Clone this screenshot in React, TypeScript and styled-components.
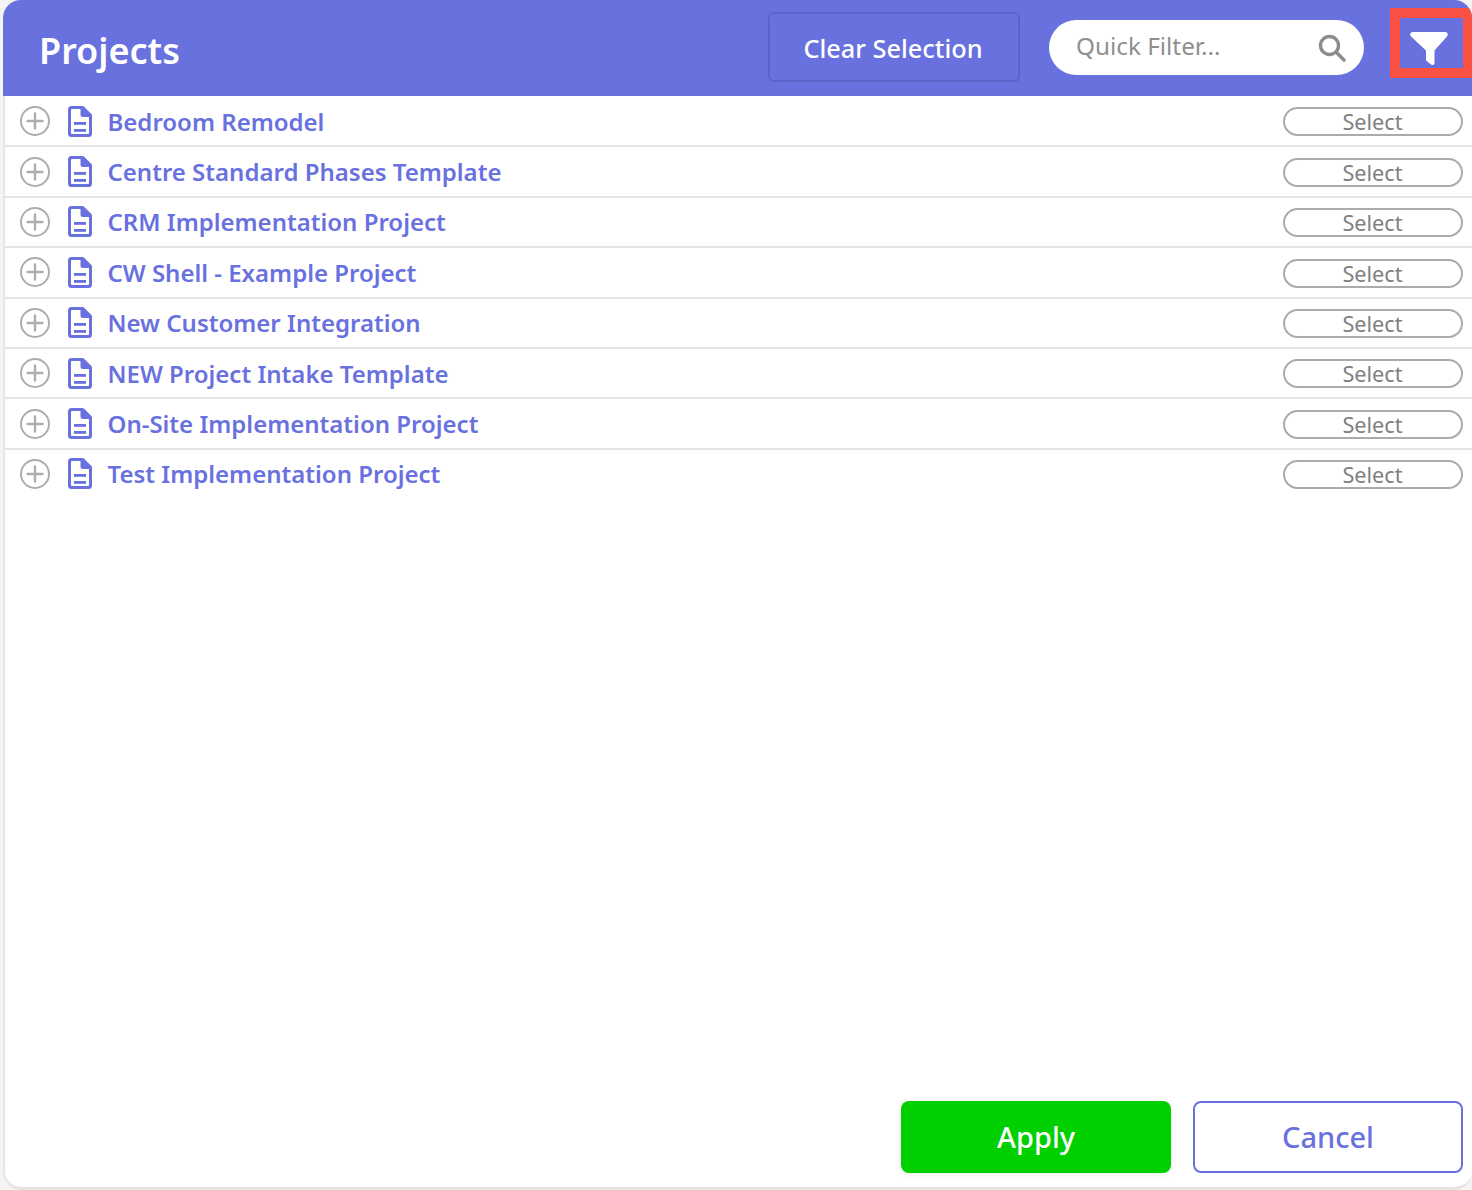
import React from "react";
import styled, { createGlobalStyle } from "styled-components";

const Global = createGlobalStyle`
  html, body { margin: 0; padding: 0; background: #f4f4f4; }
  body { font-family: "Noto Sans", "Open Sans", sans-serif; overflow: hidden; }
  * { box-sizing: border-box; }
`;

const Page = styled.div`
  width: 1472px;
  height: 1190px;
  padding-left: 3px;
  overflow: hidden;
`;

const Panel = styled.div`
  width: 1469px;
  height: 1190px;
  border-radius: 18px;
  display: flex;
  flex-direction: column;
  overflow: hidden;
`;

const Header = styled.header`
  height: 96px;
  flex: none;
  background: #6971df;
  display: flex;
  align-items: flex-start;
  padding-left: 36px;
`;

const Title = styled.h1`
  margin: 26px auto 0 0;
  font-size: 36px;
  line-height: 49px;
  font-weight: 600;
  color: #fff;
`;

const ClearButton = styled.button`
  width: 252px;
  height: 70px;
  margin-top: 12px;
  margin-right: 29px;
  padding: 2px 2px 0 0;
  background: transparent;
  border: 2px solid #5b63c9;
  border-radius: 6px;
  color: #fff;
  font: 500 25.3px/34px "Noto Sans", sans-serif;
`;

const SearchBox = styled.div`
  width: 315px;
  height: 55px;
  margin-top: 20px;
  margin-right: 26px;
  background: #fff;
  border-radius: 28px;
  display: flex;
  align-items: center;
  justify-content: space-between;
  padding: 0 18px 0 27px;
`;

const SearchText = styled.span`
  font-size: 24.3px;
  color: #8f8f8f;
  margin-top: -4px;
`;

const FilterFrame = styled.div`
  width: 82px;
  height: 70px;
  margin-top: 8px;
  border: 10px solid #fa5145;
  border-right-width: 9px;
  padding: 14px 16px 4px 10px;
`;

const Body = styled.div`
  flex: 1;
  min-height: 0;
  background: #fff;
  border-left: 2px solid #e6e6e6;
  border-bottom: 3px solid #e4e4e4;
  border-radius: 0 0 18px 18px;
  display: flex;
  flex-direction: column;
`;

const List = styled.div`
  flex: none;
  padding-top: 1px;
  display: flex;
  flex-direction: column;
`;

const Row = styled.div`
  height: 50.4px;
  display: flex;
  align-items: center;
  border-bottom: 2px solid #e5e5e5;
  padding: 0 9px 0 14.5px;
  &:last-child { border-bottom-color: transparent; }
`;

const RowIcons = styled.div`
  display: flex;
  align-items: center;
  gap: 18.5px;
  margin-right: 15.5px;
`;

const Name = styled.span`
  flex: 1;
  font-size: 24px;
  font-weight: 600;
  color: #6971df;
  white-space: nowrap;
`;

const SelectPill = styled.button`
  width: 180px;
  height: 29px;
  margin-top: 1.4px;
  padding: 0 1px 0 0;
  background: #fff;
  border: 2px solid #ababab;
  border-radius: 15px;
  color: #808080;
  font: 400 21.7px/25px "Noto Sans", sans-serif;
`;

const Footer = styled.footer`
  margin-top: auto;
  padding: 0 9px 14px 0;
  display: flex;
  justify-content: flex-end;
  gap: 22px;
`;

const FooterButton = styled.button<{ $primary?: boolean }>`
  width: 270px;
  height: 72px;
  padding: 0;
  border-radius: 8px;
  font: 500 29px/40px "Noto Sans", sans-serif;
  background: ${(p) => (p.$primary ? "#00cf00" : "#fff")};
  color: ${(p) => (p.$primary ? "#fff" : "#6971df")};
  border: ${(p) => (p.$primary ? "none" : "2px solid #6971df")};
  box-shadow: ${(p) => (p.$primary ? "0 1px 6px rgba(0,0,0,.08)" : "none")};
`;

const PlusIcon = () => (
  <svg width="30" height="30" viewBox="0 0 30 30" fill="none" stroke="#adadad">
    <circle cx="15" cy="15" r="14" strokeWidth="2" />
    <path d="M15 7.5v15M7.5 15h15" strokeWidth="2.400" strokeLinecap="round" />
  </svg>
);

const DocIcon = () => (
  <svg width="24" height="31" viewBox="0 0 24 31" fill="#6971df">
    <path
      fillRule="evenodd"
      d="M3.500 0H14.500a2 2 0 0 1 1.400.6l7.500 7.500a2 2 0 0 1 .6 1.400V27.500a3.500 3.500 0 0 1-3.500 3.500H3.500A3.500 3.500 0 0 1 0 27.500V3.500A3.500 3.500 0 0 1 3.500 0Zm.5 3a1 1 0 0 0-1 1V27a1 1 0 0 0 1 1h16a1 1 0 0 0 1-1V11h-6a2.500 2.500 0 0 1-2.500-2.500V3Z"
    />
    <rect x="6" y="16" width="12" height="2.800" />
    <rect x="6" y="23" width="12" height="2.800" />
  </svg>
);

const SearchIcon = () => (
  <svg width="28" height="28" viewBox="0 0 28 28" fill="none" stroke="#8c8c8c" strokeLinecap="round">
    <circle cx="11.500" cy="11.500" r="9" strokeWidth="3.400" />
    <path d="M18.500 18.500l7.500 7.500" strokeWidth="3.400" />
  </svg>
);

const FunnelIcon = () => (
  <svg width="38" height="33" viewBox="0 0 38 33" fill="#fff" display="block">
    <path d="M3 0h32c2.400 0 3.600 2.400 2.200 4.300L24.500 18.500V31c0 2-2.200 2.600-3.500 1.500l-4.300-3.600a2 2 0 0 1-.7-1.500V18.500L.8 4.300C-.6 2.400.6 0 3 0Z" />
  </svg>
);

const projects = [
  "Bedroom Remodel",
  "Centre Standard Phases Template",
  "CRM Implementation Project",
  "CW Shell - Example Project",
  "New Customer Integration",
  "NEW Project Intake Template",
  "On-Site Implementation Project",
  "Test Implementation Project",
];

export default function App() {
  return (
    <Page>
      <Global />
      <Panel>
        <Header>
          <Title>Projects</Title>
          <ClearButton>Clear Selection</ClearButton>
          <SearchBox>
            <SearchText>Quick Filter...</SearchText>
            <SearchIcon />
          </SearchBox>
          <FilterFrame>
            <FunnelIcon />
          </FilterFrame>
        </Header>
        <Body>
          <List>
            {projects.map((name) => (
              <Row key={name}>
                <RowIcons>
                  <PlusIcon />
                  <DocIcon />
                </RowIcons>
                <Name>{name}</Name>
                <SelectPill>Select</SelectPill>
              </Row>
            ))}
          </List>
          <Footer>
            <FooterButton $primary>Apply</FooterButton>
            <FooterButton>Cancel</FooterButton>
          </Footer>
        </Body>
      </Panel>
    </Page>
  );
}
